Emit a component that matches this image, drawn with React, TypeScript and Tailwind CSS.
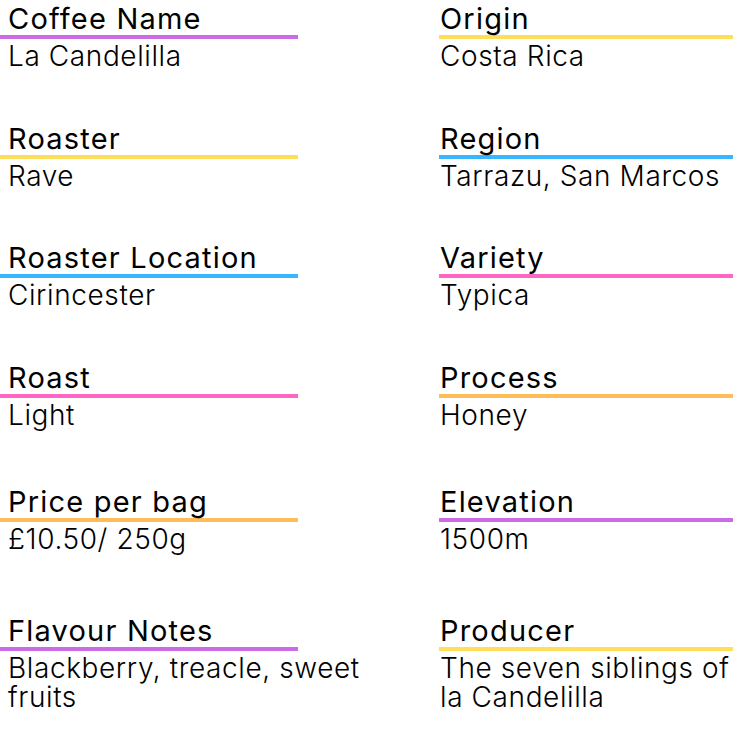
import React from "react";

interface Detail {
  label: string;
  value: string;
  color: string;
}

const left: Detail[] = [
  { label: "Coffee Name", value: "La Candelilla", color: "border-[#cb6ce6]" },
  { label: "Roaster", value: "Rave", color: "border-[#ffde59]" },
  { label: "Roaster Location", value: "Cirincester", color: "border-[#38b6ff]" },
  { label: "Roast", value: "Light", color: "border-[#ff66c4]" },
  { label: "Price per bag", value: "£10.50/ 250g", color: "border-[#ffbd59]" },
  { label: "Flavour Notes", value: "Blackberry, treacle, sweet fruits", color: "border-[#cb6ce6]" },
];

const right: Detail[] = [
  { label: "Origin", value: "Costa Rica", color: "border-[#ffde59]" },
  { label: "Region", value: "Tarrazu, San Marcos", color: "border-[#38b6ff]" },
  { label: "Variety", value: "Typica", color: "border-[#ff66c4]" },
  { label: "Process", value: "Honey", color: "border-[#ffbd59]" },
  { label: "Elevation", value: "1500m", color: "border-[#cb6ce6]" },
  { label: "Producer", value: "The seven siblings of la Candelilla", color: "border-[#ffde59]" },
];

// spacing between rows, as in the design
const rowTops = ["mt-0", "mt-[49px]", "mt-[48px]", "mt-[49px]", "mt-[53px]", "mt-[58px]"];

const Field = ({ item, pad, top, valueWidth }: { item: Detail; pad: string; top: string; valueWidth: string }) => (
  <div className={top}>
    <div className={`border-b-[4px] ${item.color} ${pad} h-[39px] text-[29px] leading-[37px] tracking-[1.2px] text-black`}>
      {item.label}
    </div>
    <div className={`${pad} ${valueWidth} pt-[3px] text-[28px] font-light leading-[29px] tracking-[0.6px] text-black`}>
      {item.value}
    </div>
  </div>
);

export default function App() {
  return (
    <div
      className="w-[750px] h-[750px] bg-white flex overflow-hidden"
      style={{ fontFamily: "Inter, 'Noto Sans', sans-serif" }}
    >
      <div className="w-[298px] shrink-0 flex flex-col">
        {left.map((item, i) => (
          <Field key={item.label} item={item} pad="pl-2" top={rowTops[i]} valueWidth="w-[365px]" />
        ))}
      </div>
      <div className="w-[294px] shrink-0 ml-[141px] flex flex-col">
        {right.map((item, i) => (
          <Field key={item.label} item={item} pad="pl-px" top={rowTops[i]} valueWidth="w-[294px]" />
        ))}
      </div>
    </div>
  );
}
